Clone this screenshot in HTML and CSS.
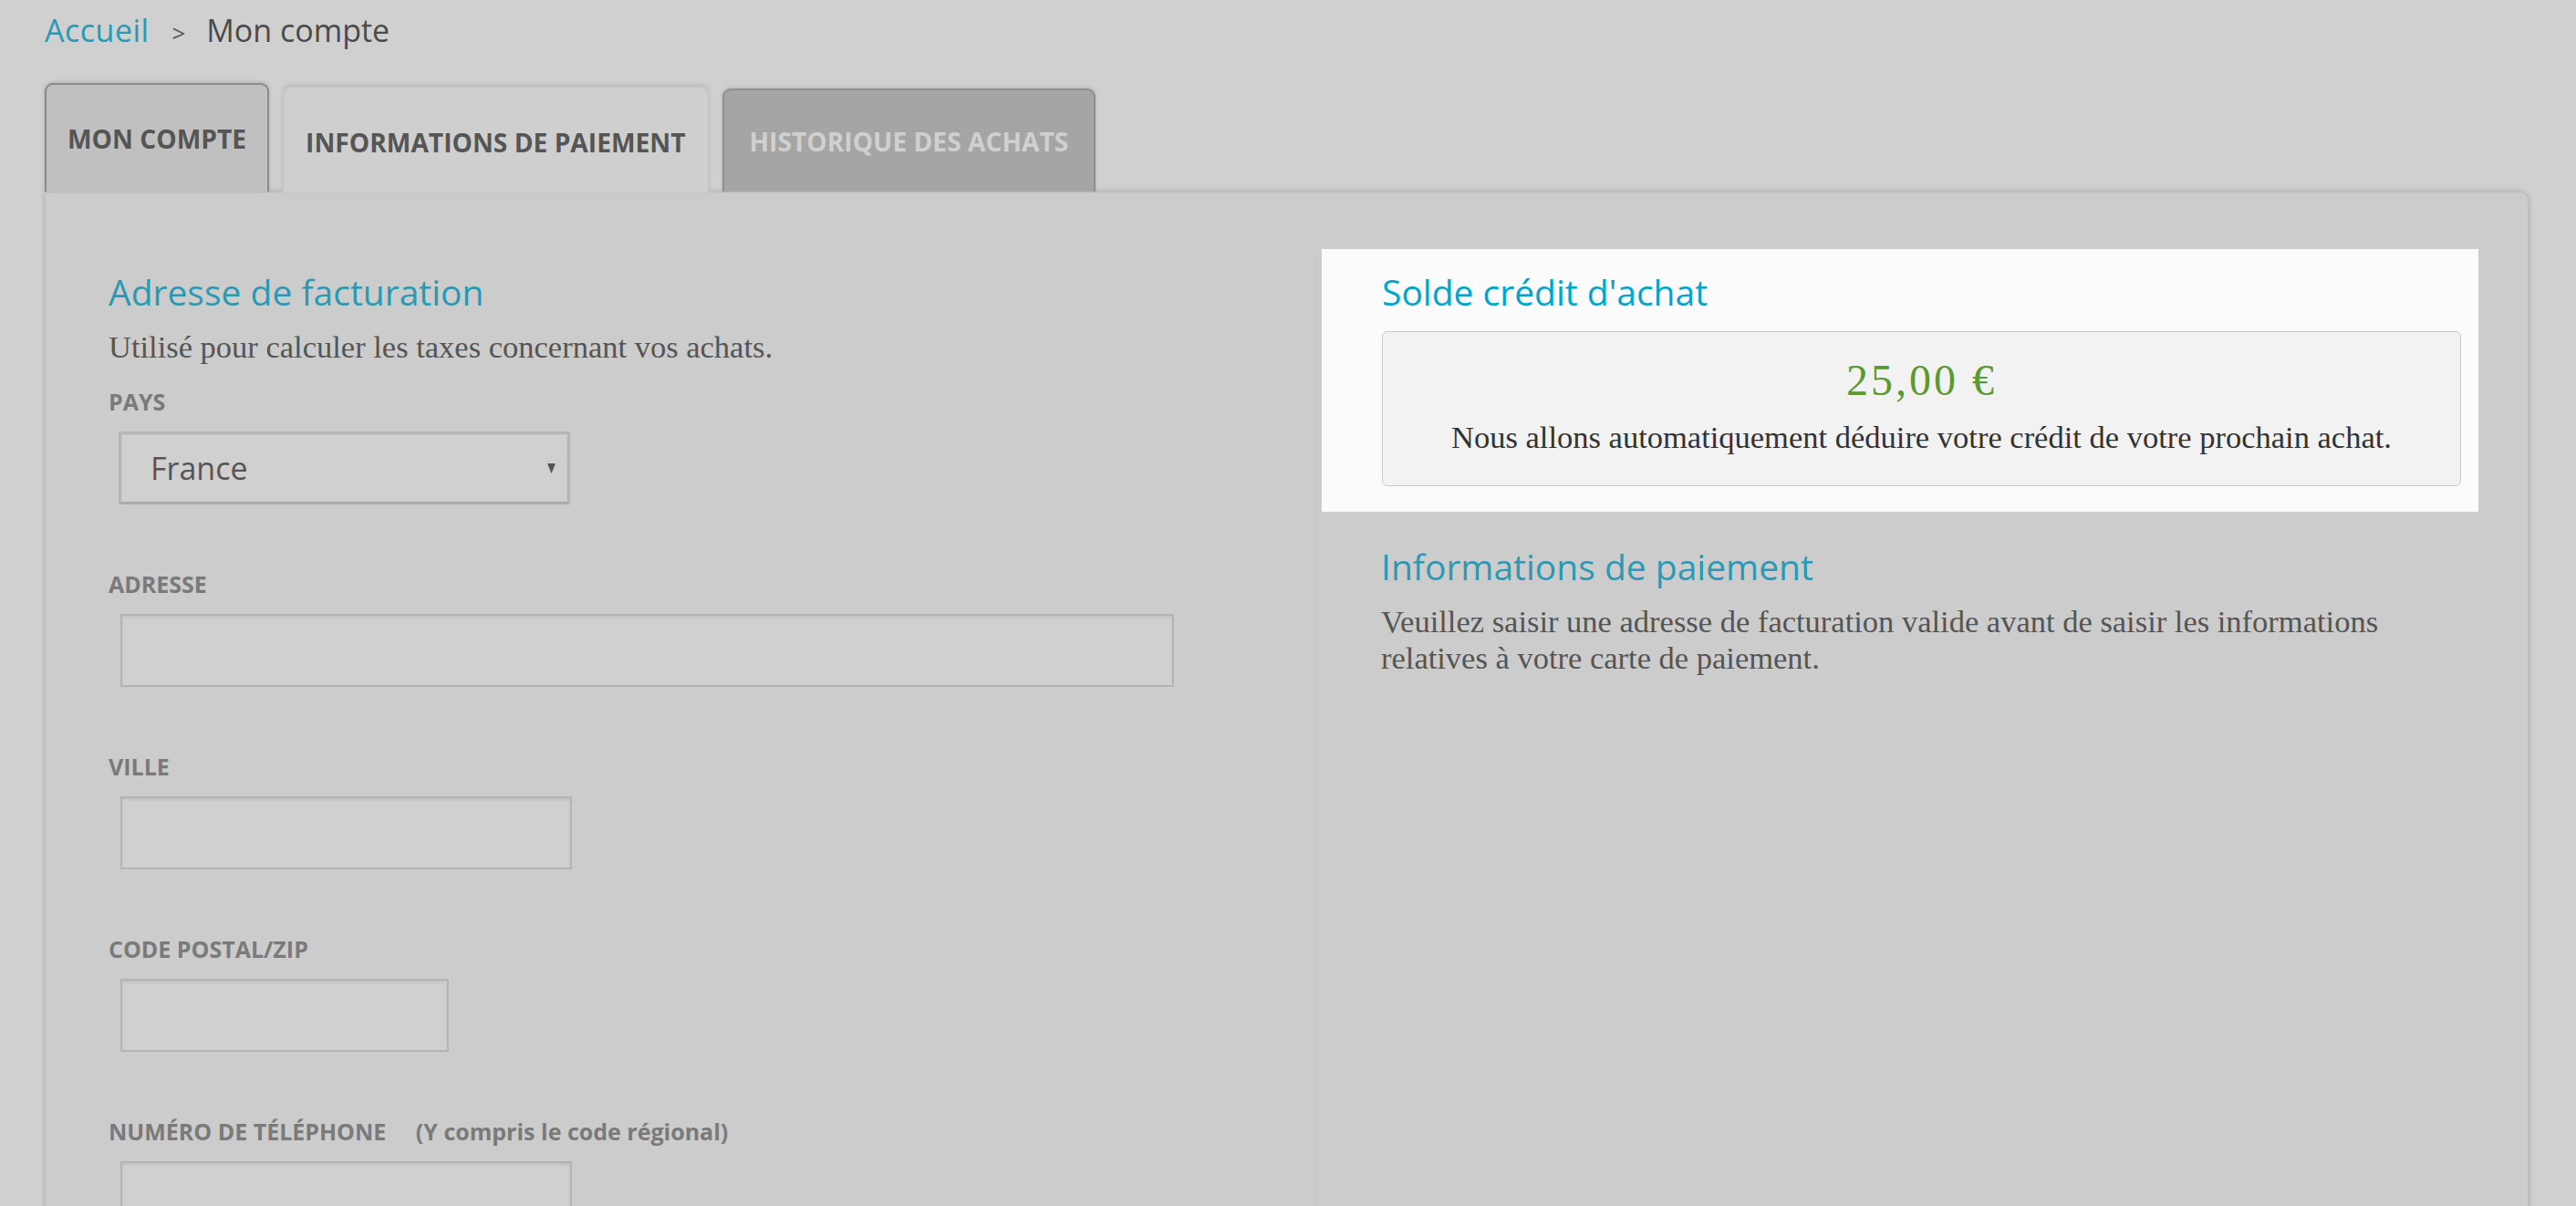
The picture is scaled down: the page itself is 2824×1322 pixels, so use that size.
FILE: index.html
```html
<!DOCTYPE html>
<html lang="fr">
<head>
    <meta charset="UTF-8">
    <meta name="viewport" content="width=device-width, initial-scale=1.0">
    <title>Mon compte - Informations de paiement</title>
    <link rel="stylesheet" href="styles.css">
</head>
<body>
    <!-- Fil d'Ariane -->
    <nav class="breadcrumb">
        <a href="#">Accueil</a>
        <span class="breadcrumb-sep">&gt;</span>
        <span class="breadcrumb-current">Mon compte</span>
    </nav>

    <!-- Onglets du compte -->
    <div class="account-tabs">
        <a href="#" class="account-tab tab-visited">MON COMPTE</a>
        <a href="#" class="account-tab tab-active">INFORMATIONS DE PAIEMENT</a>
        <a href="#" class="account-tab tab-disabled">HISTORIQUE DES ACHATS</a>
    </div>

    <div class="account-panel">
        <!-- Colonne gauche : adresse -->
        <section class="billing-col">
            <h2 class="section-title">Adresse de facturation</h2>
            <p class="section-text">Utilisé pour calculer les taxes concernant vos achats.</p>

            <div class="form-field">
                <label class="field-label">PAYS</label>
                <div class="field-select">
                    <span>France</span>
                    <svg class="select-arrow" width="9" height="11" viewBox="0 0 9 11"><path d="M0 0 H9 L4.5 11 Z" fill="#555"/></svg>
                </div>
            </div>

            <div class="form-field">
                <label class="field-label">ADRESSE</label>
                <input type="text" class="field-input input-wide">
            </div>

            <div class="form-field">
                <label class="field-label">VILLE</label>
                <input type="text" class="field-input input-medium">
            </div>

            <div class="form-field">
                <label class="field-label">CODE POSTAL/ZIP</label>
                <input type="text" class="field-input input-small">
            </div>

            <div class="form-field">
                <label class="field-label">NUMÉRO DE TÉLÉPHONE <span class="label-hint">(Y compris le code régional)</span></label>
                <input type="text" class="field-input input-medium">
            </div>
        </section>

        <!-- Colonne droite : crédit + paiement -->
        <section class="payment-col">
            <div class="credit-highlight">
                <h2 class="section-title credit-title">Solde crédit d'achat</h2>
                <div class="credit-box">
                    <div class="credit-amount">25,00 €</div>
                    <p class="credit-note">Nous allons automatiquement déduire votre crédit de votre prochain achat.</p>
                </div>
            </div>

            <h2 class="section-title payment-title">Informations de paiement</h2>
            <p class="section-text payment-text">Veuillez saisir une adresse de facturation valide avant de saisir les informations relatives à votre carte de paiement.</p>
        </section>
    </div>
</body>
</html>
```

FILE: styles.css
```css
/* Mon compte - page paiement (vue assombrie par le guide) */
body {
    margin: 0;
    background: #d0d0d0;
    font-family: "Open Sans", "Noto Sans", sans-serif;
    color: #555;
}

/* Fil d'Ariane */
.breadcrumb {
    height: 50px;
    padding: 8px 0 0 49px;
    font-size: 34px;
    line-height: 50px;
    color: #4a4a4a;
}

.breadcrumb a {
    color: #2a9ab4;
    text-decoration: none;
    letter-spacing: 0.5px;
}

.breadcrumb-sep {
    font-size: 26px;
    line-height: 1;
    margin: 0 14px 0 16px;
    color: #555;
}

/* Onglets */
.account-tabs {
    display: flex;
    align-items: flex-end;
    gap: 15px;
    margin: 33px 0 0 49px;
}

.account-tab {
    display: flex;
    align-items: center;
    box-sizing: border-box;
    padding: 0 23px;
    border: 2px solid;
    border-bottom: 0;
    border-radius: 9px 9px 0 0;
    font-size: 28.2px;
    font-weight: 700;
    text-decoration: none;
}

.tab-visited {
    height: 119px;
    background: #c0c0c0;
    border-color: #8b8b8b;
    color: #555;
    box-shadow: 0 -1px 4px rgba(0, 0, 0, 0.15);
}

.tab-active {
    position: relative;
    z-index: 1;
    height: 116px;
    margin-bottom: -1px;
    padding-top: 3px;
    background: #cfcfcf;
    border-color: #c8c8c8;
    color: #555;
    box-shadow: 0 -2px 5px rgba(0, 0, 0, 0.12);
}

.tab-disabled {
    height: 113px;
    padding: 0 28px;
    background: #a5a5a5;
    border-color: #8f8f8f;
    color: #d0d0d0;
    box-shadow: 0 -1px 4px rgba(0, 0, 0, 0.12);
}

/* Panneau principal */
.account-panel {
    display: grid;
    grid-template-columns: 1392px 1fr;
    min-height: 1150px;
    margin: 0 52px 0 49px;
    padding-top: 69px;
    background: #cccccc;
    border: 1px solid #bdbdbd;
    border-radius: 0 9px 0 0;
    box-shadow: 0 0 6px rgba(0, 0, 0, 0.18);
}

.section-title {
    margin: 0;
    font-size: 39px;
    font-weight: 400;
    line-height: 46px;
    color: #2a9ab4;
}

.section-text {
    margin: 17px 0 0;
    font-family: "Liberation Serif", "Times New Roman", serif;
    font-size: 34.5px;
    line-height: 40px;
    color: #555;
}

/* Colonne adresse */
.billing-col {
    padding: 17px 0 0 69px;
}

.form-field {
    margin-top: 72px;
}

.section-text + .form-field {
    margin-top: 25px;
}

.field-label {
    display: block;
    margin-bottom: 18px;
    font-size: 25px;
    font-weight: 700;
    line-height: 30px;
    color: #7a7a7a;
}

.label-hint {
    margin-left: 26px;
}

.field-select {
    display: flex;
    align-items: center;
    justify-content: space-between;
    box-sizing: border-box;
    width: 495px;
    height: 80px;
    margin-left: 11px;
    padding: 0 13px 0 32px;
    background: #d0d0d0;
    border: 3px solid #b6b6b6;
    border-bottom-color: #acacac;
    box-shadow: inset 0 0 0 1px #c8c8c8;
    font-size: 34px;
    color: #555;
}

.field-input {
    display: block;
    box-sizing: border-box;
    height: 80px;
    margin-left: 13px;
    background: #d0d0d0;
    border: 2px solid #b4b4b4;
    box-shadow: inset 0 2px 3px rgba(0, 0, 0, 0.08);
    outline: none;
}

.input-wide { width: 1155px; }
.input-medium { width: 495px; }
.input-small { width: 360px; }

/* Colonne paiement */
.payment-col {
    border-left: 1px solid #c2c2c2;
}

.credit-highlight {
    margin: -7px 54px 0 6px;
    padding: 24px 19px 28px 66px;
    background: #fbfbfb;
}

.credit-title {
    color: #00a5cc;
}

.credit-box {
    margin-top: 20px;
    padding: 25px 0 33px;
    background: #f2f2f2;
    border: 1px solid #c9c9c9;
    border-radius: 6px;
    text-align: center;
}

.credit-amount {
    font-family: "Liberation Serif", "Times New Roman", serif;
    font-size: 48px;
    line-height: 56px;
    letter-spacing: 3px;
    color: #5a9a2e;
}

.credit-note {
    margin: 14px 0 0;
    font-family: "Liberation Serif", "Times New Roman", serif;
    font-size: 34.5px;
    line-height: 40px;
    color: #333;
}

.payment-title {
    margin-top: 37px;
    padding-left: 71px;
}

.payment-text {
    padding: 0 73px 0 71px;
}
```
